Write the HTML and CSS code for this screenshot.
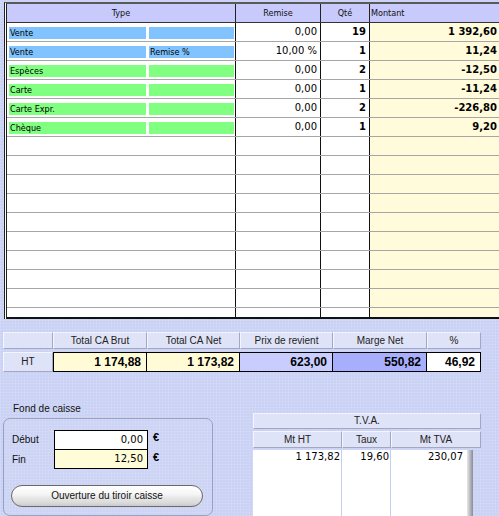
FILE: index.html
```html
<!DOCTYPE html>
<html lang="fr">
<head>
<meta charset="utf-8">
<title>Caisse</title>
<link rel="stylesheet" href="styles.css">
</head>
<body>
<div class="grid">
  <div class="ghead">
    <div class="h">Type</div>
    <div class="h">Remise</div>
    <div class="h">Qté</div>
    <div class="h hm">Montant</div>
  </div>
  <div class="gbody">
    <div class="row"><div class="type"><span class="tag a blue">Vente</span><span class="tag b blue"></span></div><div class="num">0,00</div><div class="num b">19</div><div class="num b m">1 392,60</div></div>
    <div class="row"><div class="type"><span class="tag a blue">Vente</span><span class="tag b blue">Remise %</span></div><div class="num">10,00 %</div><div class="num b">1</div><div class="num b m">11,24</div></div>
    <div class="row"><div class="type"><span class="tag a green">Espèces</span><span class="tag b green"></span></div><div class="num">0,00</div><div class="num b">2</div><div class="num b m">-12,50</div></div>
    <div class="row"><div class="type"><span class="tag a green">Carte</span><span class="tag b green"></span></div><div class="num">0,00</div><div class="num b">1</div><div class="num b m">-11,24</div></div>
    <div class="row"><div class="type"><span class="tag a green">Carte Expr.</span><span class="tag b green"></span></div><div class="num">0,00</div><div class="num b">2</div><div class="num b m">-226,80</div></div>
    <div class="row"><div class="type"><span class="tag a green">Chèque</span><span class="tag b green"></span></div><div class="num">0,00</div><div class="num b">1</div><div class="num b m">9,20</div></div>
    <div class="row"><div class="type"></div><div class="num"></div><div class="num"></div><div class="num m"></div></div>
    <div class="row"><div class="type"></div><div class="num"></div><div class="num"></div><div class="num m"></div></div>
    <div class="row"><div class="type"></div><div class="num"></div><div class="num"></div><div class="num m"></div></div>
    <div class="row"><div class="type"></div><div class="num"></div><div class="num"></div><div class="num m"></div></div>
    <div class="row"><div class="type"></div><div class="num"></div><div class="num"></div><div class="num m"></div></div>
    <div class="row"><div class="type"></div><div class="num"></div><div class="num"></div><div class="num m"></div></div>
    <div class="row"><div class="type"></div><div class="num"></div><div class="num"></div><div class="num m"></div></div>
    <div class="row"><div class="type"></div><div class="num"></div><div class="num"></div><div class="num m"></div></div>
    <div class="row"><div class="type"></div><div class="num"></div><div class="num"></div><div class="num m"></div></div>
    <div class="row"><div class="type"></div><div class="num"></div><div class="num"></div><div class="num m"></div></div>
  </div>
</div>

<div class="sum">
  <div class="srow">
    <div class="sh"></div>
    <div class="sh">Total CA Brut</div>
    <div class="sh">Total CA Net</div>
    <div class="sh">Prix de revient</div>
    <div class="sh">Marge Net</div>
    <div class="sh">%</div>
  </div>
  <div class="srow vals">
    <div class="sh ht">HT</div>
    <div class="sv first yellow">1 174,88</div>
    <div class="sv yellow">1 173,82</div>
    <div class="sv lav">623,00</div>
    <div class="sv lav2">550,82</div>
    <div class="sv white">46,92</div>
  </div>
</div>

<div class="bottom">
  <div class="fond">
    <div class="flabel">Fond de caisse</div>
    <div class="fbox">
      <div class="frow"><span class="fl">Début</span><span class="fin in1">0,00</span><span class="eur">€</span></div>
      <div class="frow"><span class="fl">Fin</span><span class="fin in2">12,50</span><span class="eur">€</span></div>
      <div class="btn">Ouverture du tiroir caisse</div>
    </div>
  </div>
  <div class="tva">
    <div class="th th1">T.V.A.</div>
    <div class="tcols th2">
      <div class="th">Mt HT</div>
      <div class="th">Taux</div>
      <div class="th">Mt TVA</div>
    </div>
    <div class="tbody">
      <div class="tc c1">1 173,82</div>
      <div class="tc c2">19,60</div>
      <div class="tc c3">230,07</div>
      <div class="shadow"></div>
    </div>
  </div>
</div>
</body>
</html>
```

FILE: styles.css
```css
html, body {
  margin: 0;
  padding: 0;
}
body {
  width: 499px;
  height: 516px;
  overflow: hidden;
  background-color: #c9d1f4;
  background-image:
    repeating-linear-gradient(0deg, rgba(255,255,255,0.10) 0 1px, transparent 1px 3px),
    repeating-linear-gradient(90deg, rgba(255,255,255,0.10) 0 1px, transparent 1px 3px);
  font-family: "Liberation Sans", Arial, sans-serif;
  color: #000;
}

/* ---------- main grid ---------- */
.grid {
  margin: 2px 0 0 4px;
  border-left: 3px double #222;
  border-top: 2px solid #5a5a5a;
  background: #fff;
}
.ghead {
  display: grid;
  grid-template-columns: 229px 85px 49px 1fr;
  height: 18px;
  border-bottom: 1px solid #333;
  background: #c8cafc;
  font: 9px "DejaVu Sans Condensed", "DejaVu Sans", sans-serif;
  color: #111;
}
.ghead .h {
  display: flex;
  align-items: center;
  justify-content: center;
  border-right: 1px solid #222;
}
.ghead .hm {
  justify-content: flex-start;
  border-right: 0;
  padding-left: 1px;
}
.gbody {
  height: 294px;
  overflow: hidden;
  border-bottom: 2px solid #111;
}
.row {
  display: grid;
  grid-template-columns: 229px 85px 49px 1fr;
  height: 19px;
  box-sizing: border-box;
  border-bottom: 1px solid #a6a6a6;
}
.type {
  display: flex;
  gap: 3px;
  padding: 4px 0 0 2px;
  border-right: 1px solid #111;
}
.tag {
  display: block;
  height: 12px;
  line-height: 12px;
  padding-left: 1px;
  box-sizing: border-box;
  font: 9px/12px "DejaVu Sans Condensed", "DejaVu Sans", sans-serif;
}
.tag.a { width: 137px; }
.tag.b { width: 85px; }
.blue { background: #80c3ff; }
.green { background: #80ff80; }
.num {
  border-right: 1px solid #111;
  text-align: right;
  padding-right: 3px;
  font: 10px/18px "DejaVu Sans", sans-serif;
  white-space: nowrap;
}
.num.b { font-weight: bold; }
.num.m {
  background: #fffbdb;
  border-right: 0;
  padding-right: 2px;
}

/* ---------- summary ---------- */
.sum {
  margin: 13px 0 0 3px;
  width: 478px;
}
.srow {
  display: grid;
  grid-template-columns: 50px 94px 93px 93px 94px 54px;
}
.sh {
  height: 17px;
  box-sizing: border-box;
  background: #dfe3f7;
  border-top: 1px solid #f4f6ff;
  border-left: 1px solid #f4f6ff;
  border-right: 1px solid #a3a7c0;
  border-bottom: 1px solid #a3a7c0;
  font-size: 10px;
  line-height: 15px;
  text-align: center;
  color: #222;
}
.vals {
  margin-top: 3px;
}
.vals .ht {
  height: 20px;
  line-height: 18px;
}
.sv {
  height: 20px;
  box-sizing: border-box;
  border: 1px solid #000;
  border-left: 0;
  font-weight: bold;
  font-size: 12px;
  line-height: 18px;
  text-align: right;
  padding-right: 5px;
}
.sv.first { border-left: 1px solid #000; }
.yellow { background: #fffbd6; }
.lav { background: #c8cdfd; }
.lav2 { background: #a7aefc; }
.white { background: #fff; }

/* ---------- bottom ---------- */
.bottom {
  display: flex;
  align-items: flex-start;
  margin-top: 28px;
}
.fond {
  margin-left: 3px;
  width: 210px;
}
.flabel {
  height: 18px;
  line-height: 18px;
  font-size: 10px;
  padding-left: 10px;
  color: #111;
}
.fbox {
  height: 98px;
  box-sizing: border-box;
  border: 1px solid #98a0c4;
  border-radius: 7px;
  background: rgba(255,255,255,0.06);
  padding: 11px 0 0 8px;
}
.frow {
  display: flex;
  align-items: flex-start;
}
.fl {
  width: 42px;
  font-size: 10px;
  line-height: 19px;
  color: #111;
}
.fin {
  width: 94px;
  box-sizing: border-box;
  border: 1px solid #000;
  text-align: right;
  padding-right: 4px;
  font: 10px/18px "DejaVu Sans", sans-serif;
}
.in1 { height: 20px; background: #fff; }
.in2 { height: 19px; border-top: 0; line-height: 17px; background: #fffcd8; }
.eur {
  margin-left: 5px;
  font-weight: bold;
  font-size: 11px;
  line-height: 15px;
}
.btn {
  margin: 16px 0 0 -1px;
  width: 192px;
  height: 22px;
  box-sizing: border-box;
  border: 1px solid #6a6a6a;
  border-radius: 11px;
  background: linear-gradient(to bottom, #ffffff 0%, #f6f6f6 40%, #e6e6e6 60%, #dadada 85%, #c9c9c9 100%);
  box-shadow: inset 0 1px 0 #fff;
  font-size: 10px;
  line-height: 20px;
  text-align: center;
  color: #111;
}

/* ---------- TVA ---------- */
.tva {
  margin: 13px 0 0 40px;
  width: 228px;
}
.th {
  height: 16px;
  box-sizing: border-box;
  background: #dfe3f7;
  border-top: 1px solid #f4f6ff;
  border-left: 1px solid #f4f6ff;
  border-right: 1px solid #a3a7c0;
  border-bottom: 1px solid #a3a7c0;
  font-size: 10px;
  line-height: 14px;
  text-align: center;
  color: #222;
}
.tcols {
  display: grid;
  grid-template-columns: 89px 49px 90px;
}
.th2 {
  margin-top: 2px;
}
.th2 .th { height: 17px; line-height: 15px; }
.tbody {
  margin-top: 2px;
  display: grid;
  grid-template-columns: 89px 49px 76px 6px;
  height: 80px;
}
.tc {
  background: #fff;
  text-align: right;
  font: 10px/14px "DejaVu Sans", sans-serif;
  white-space: nowrap;
}
.c1 { border-right: 1px solid #c6cdf0; padding-right: 1px; }
.c2 { border-right: 1px solid #c6cdf0; padding-right: 1px; }
.c3 { padding-right: 4px; }
.shadow {
  background: linear-gradient(to right, #e8e8ec, #b0b0b8 60%, #8c8c94);
}
```
